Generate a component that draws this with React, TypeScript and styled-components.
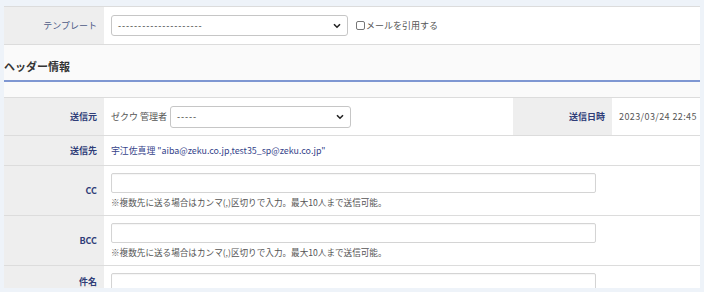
import React from 'react';
import styled, { createGlobalStyle } from 'styled-components';

const GlobalStyle = createGlobalStyle`
  html, body {
    margin: 0;
    padding: 0;
    background: #eef3f9;
  }
  body {
    font-family: "Noto Sans CJK JP", "Noto Sans", "Liberation Sans", sans-serif;
    font-size: 9px;
    color: #555;
  }
  * { box-sizing: border-box; }
`;

const Page = styled.div`
  height: 292px;
  padding: 6px 4px 4px 4px;
`;

const Panel = styled.div`
  height: 282px;
  overflow: hidden;
  background: #fff;
  border-top: 1px solid #dcdcdc;
`;

const Row = styled.div<{ $h: number; $cols?: string }>`
  display: grid;
  grid-template-columns: ${({ $cols }) => $cols || '100px 1fr'};
  height: ${({ $h }) => $h}px;
  border-bottom: 1px solid #dcdcdc;
`;

const LabelCell = styled.div<{ $light?: boolean }>`
  background: #eeeeee;
  display: flex;
  align-items: center;
  justify-content: flex-end;
  padding-right: 7px;
  color: ${({ $light }) => ($light ? '#4d5a86' : '#2f3d78')};
  font-weight: ${({ $light }) => ($light ? 400 : 700)};
`;

const ValueCell = styled.div<{ $top?: boolean }>`
  display: flex;
  flex-direction: ${({ $top }) => ($top ? 'column' : 'row')};
  align-items: ${({ $top }) => ($top ? 'flex-start' : 'center')};
  padding: ${({ $top }) => ($top ? '7px 0 0 7px' : '0 0 0 7px')};
  gap: ${({ $top }) => ($top ? '3px' : '0')};
  min-width: 0;
  white-space: nowrap;
`;

const SelectBox = styled.div<{ $w: number; $h: number }>`
  position: relative;
  width: ${({ $w }) => $w}px;
  height: ${({ $h }) => $h}px;
  border: 1px solid #c6c6c6;
  border-radius: 3px;
  background: #fff;
  color: #333;
  display: flex;
  align-items: center;
  padding-left: 6px;
  font-size: 9px;
  letter-spacing: 0.9px;
`;

const Chevron = styled.svg`
  position: absolute;
  right: 6px;
  top: 50%;
  margin-top: -3px;
`;

const CheckLabel = styled.label`
  display: flex;
  align-items: center;
  margin-left: 8px;
  color: #555;
`;

const Check = styled.span`
  display: inline-block;
  width: 9px;
  height: 9px;
  border: 1px solid #777;
  border-radius: 2px;
  background: #fff;
  margin-right: 1px;
`;

const SectionHead = styled.div`
  background: #fafafa;
  height: 37px;
  padding-top: 13px;
  font-size: 11px;
  line-height: 17px;
  font-weight: 700;
  color: #333;
  border-bottom: 2px solid #7f97d2;
`;

const Spacer = styled.div`
  background: #fafafa;
  height: 16px;
  border-bottom: 1px solid #dcdcdc;
`;

const Sender = styled.span`
  color: #555;
  margin-right: 3px;
`;

const Recipient = styled.span`
  color: #35438a;
  font-size: 8.9px;
`;

const DateText = styled.span`
  color: #555;
  letter-spacing: 0.4px;
`;

const TextInput = styled.div`
  width: 485px;
  height: 20px;
  border: 1px solid #d4d4d4;
  border-radius: 2px;
  box-shadow: inset 0 1px 1px rgba(0, 0, 0, 0.04);
  background: #fff;
  flex-shrink: 0;
`;

const Note = styled.div`
  color: #555;
  font-size: 8.6px;
`;

const SelectField = ({ w, h, text }: { w: number; h: number; text: string }) => (
  <SelectBox $w={w} $h={h}>
    {text}
    <Chevron width="8" height="6" viewBox="0 0 8 6">
      <path d="M1 1.2 L4 4.2 L7 1.2" fill="none" stroke="#222" strokeWidth="1.6" />
    </Chevron>
  </SelectBox>
);

const NOTE = '※複数先に送る場合はカンマ(,)区切りで入力。最大10人まで送信可能。';

export default function App() {
  return (
    <>
      <GlobalStyle />
      <Page>
        <Panel>
          <Row $h={38}>
            <LabelCell $light>テンプレート</LabelCell>
            <ValueCell>
              <SelectField w={237} h={21} text="---------------------" />
              <CheckLabel>
                <Check />
                メールを引用する
              </CheckLabel>
            </ValueCell>
          </Row>

          <SectionHead>ヘッダー情報</SectionHead>
          <Spacer />

          <Row $h={38} $cols="100px 409px 99px 1fr">
            <LabelCell>送信元</LabelCell>
            <ValueCell>
              <Sender>ゼクウ 管理者</Sender>
              <SelectField w={181} h={22} text="-----" />
            </ValueCell>
            <LabelCell>送信日時</LabelCell>
            <ValueCell>
              <DateText>2023/03/24 22:45</DateText>
            </ValueCell>
          </Row>

          <Row $h={30}>
            <LabelCell>送信先</LabelCell>
            <ValueCell>
              <Recipient>宇江佐真理 "aiba@zeku.co.jp,test35_sp@zeku.co.jp"</Recipient>
            </ValueCell>
          </Row>

          <Row $h={50}>
            <LabelCell>CC</LabelCell>
            <ValueCell $top>
              <TextInput />
              <Note>{NOTE}</Note>
            </ValueCell>
          </Row>

          <Row $h={50}>
            <LabelCell>BCC</LabelCell>
            <ValueCell $top>
              <TextInput />
              <Note>{NOTE}</Note>
            </ValueCell>
          </Row>

          <Row $h={32}>
            <LabelCell>件名</LabelCell>
            <ValueCell $top>
              <TextInput />
            </ValueCell>
          </Row>
        </Panel>
      </Page>
    </>
  );
}
